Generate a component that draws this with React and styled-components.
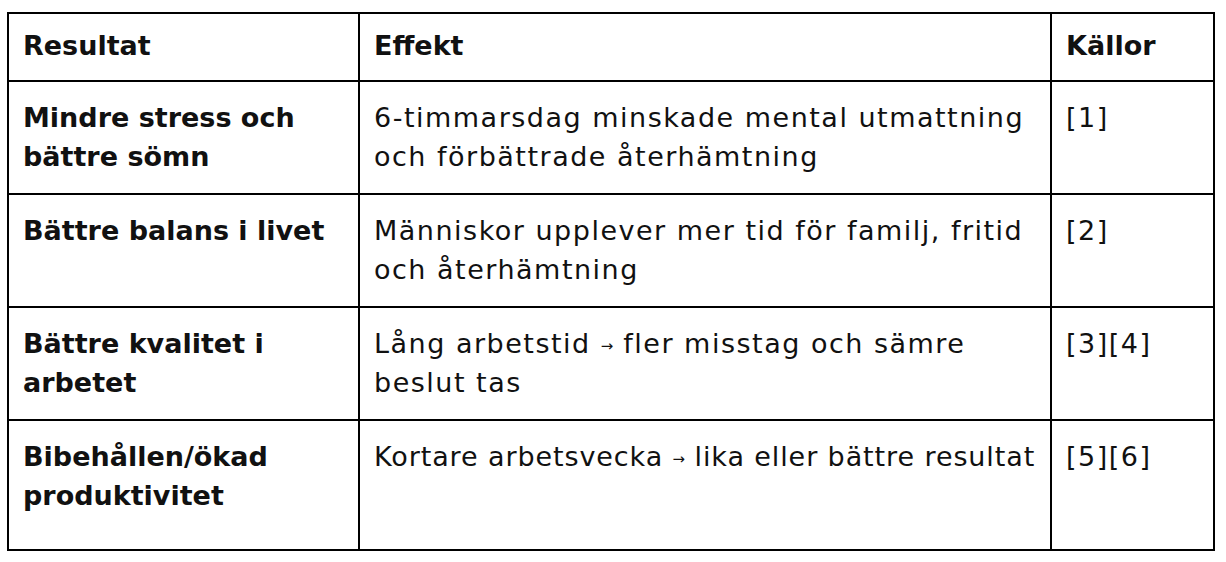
import React from "react";
import styled, { createGlobalStyle } from "styled-components";

const Global = createGlobalStyle`
  html, body {
    margin: 0;
    padding: 0;
    background: #fff;
  }
  body {
    font-family: "DejaVu Sans", "Open Sans", sans-serif;
    color: #111;
  }
`;

const Page = styled.div`
  padding: 12px 0 0 7px;
`;

const Table = styled.table`
  border-collapse: collapse;
  table-layout: fixed;
  width: 1206px;
  font-size: 27px;
  line-height: 39px;
`;

const Col = styled.col`
  width: ${(p) => p.$w}px;
`;

const Head = styled.th`
  border: 2px solid #000;
  padding: 12px 14px 15px;
  text-align: left;
  vertical-align: top;
  font-weight: 700;
`;

const Cell = styled.td`
  border: 2px solid #000;
  padding: 16px 14px ${(p) => (p.$last ? 34 : 17)}px;
  vertical-align: top;
  white-space: nowrap;
  font-weight: ${(p) => (p.$bold ? 700 : 400)};
  letter-spacing: ${(p) => (p.$bold ? 0 : p.$spacing ?? 1.5)}px;
`;

const Arrow = styled.span`
  font-size: 0.55em;
  letter-spacing: 0;
  line-height: 0;
  vertical-align: 0.15em;
`;

const rows = [
  {
    title: ["Mindre stress och", "bättre sömn"],
    effect: ["6-timmarsdag minskade mental utmattning", "och förbättrade återhämtning"],
    src: "[1]",
  },
  {
    title: ["Bättre balans i livet"],
    effect: ["Människor upplever mer tid för familj, fritid", "och återhämtning"],
    src: "[2]",
  },
  {
    title: ["Bättre kvalitet i", "arbetet"],
    effect: [
      <>Lång arbetstid <Arrow>→</Arrow> fler misstag och sämre</>,
      "beslut tas",
    ],
    src: "[3][4]",
  },
  {
    title: ["Bibehållen/ökad", "produktivitet"],
    effect: [<>Kortare arbetsvecka <Arrow>→</Arrow> lika eller bättre resultat</>],
    src: "[5][6]",
    spacing: 0.9,
  },
];

const Lines = ({ items }) =>
  items.map((t, i) => (
    <React.Fragment key={i}>
      {i > 0 && <br />}
      {t}
    </React.Fragment>
  ));

export default function App() {
  return (
    <Page>
      <Global />
      <Table>
        <colgroup>
          <Col $w={351} />
          <Col $w={692} />
          <Col $w={163} />
        </colgroup>
        <thead>
          <tr>
            <Head>Resultat</Head>
            <Head>Effekt</Head>
            <Head>Källor</Head>
          </tr>
        </thead>
        <tbody>
          {rows.map((r, i) => {
            const last = i === rows.length - 1;
            return (
              <tr key={i}>
                <Cell $bold $last={last}>
                  <Lines items={r.title} />
                </Cell>
                <Cell $last={last} $spacing={r.spacing}>
                  <Lines items={r.effect} />
                </Cell>
                <Cell $last={last}>{r.src}</Cell>
              </tr>
            );
          })}
        </tbody>
      </Table>
    </Page>
  );
}
